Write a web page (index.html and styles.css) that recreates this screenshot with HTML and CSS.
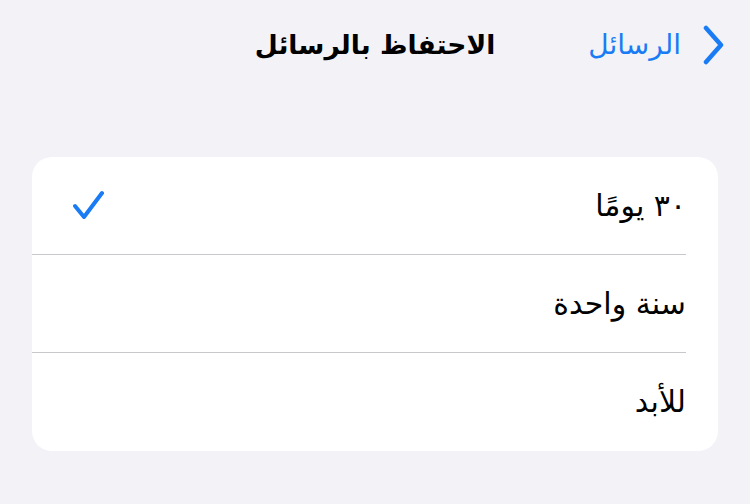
FILE: index.html
```html
<!DOCTYPE html>
<html lang="ar" dir="rtl">
<head>
<meta charset="utf-8">
<link rel="stylesheet" href="styles.css">
</head>
<body>
<header class="nav">
  <div class="back">
    <svg class="chev" width="22" height="40" viewBox="0 0 22 40"><path d="M3 3 L18 20 L3 37" fill="none" stroke="#1a7cf5" stroke-width="4.5" stroke-linecap="round" stroke-linejoin="round"/></svg>
    <span class="back-label">الرسائل</span>
  </div>
  <h1 class="title">الاحتفاظ بالرسائل</h1>
  <div class="spacer"></div>
</header>
<main>
  <section class="card">
    <div class="row">
      <div class="row-inner">
        <span class="label">٣٠ يومًا</span>
        <svg class="check" width="32" height="32" viewBox="0 0 32 32"><path d="M2 16 L11 27 L29 3" fill="none" stroke="#1a7cf5" stroke-width="4" stroke-linecap="round" stroke-linejoin="round"/></svg>
      </div>
    </div>
    <div class="row">
      <div class="row-inner">
        <span class="label">سنة واحدة</span>
      </div>
    </div>
    <div class="row last">
      <div class="row-inner">
        <span class="label">للأبد</span>
      </div>
    </div>
  </section>
</main>
</body>
</html>
```
FILE: styles.css
```css
html, body {
  margin: 0;
  padding: 0;
}
body {
  background: #f2f2f7;
  font-family: "DejaVu Sans", "Noto Sans", sans-serif;
  color: #000;
  width: 750px;
  height: 504px;
  overflow: hidden;
}
.nav {
  display: grid;
  grid-template-columns: 1fr auto 1fr;
  align-items: center;
  height: 90px;
}
.back {
  display: flex;
  align-items: center;
  gap: 22px;
  padding-right: 25px;
  color: #1a7cf5;
}
.chev {
  display: block;
}
.back-label {
  font-size: 28px;
  line-height: 1;
}
.title {
  margin: 0;
  font-size: 26.5px;
  font-weight: bold;
  line-height: 1;
}
.card {
  margin: 67px 32px 0;
  background: #fff;
  border-radius: 20px;
  overflow: hidden;
}
.row {
  padding-right: 32px;
  height: 98px;
}
.row-inner {
  height: 97px;
  border-bottom: 1px solid #c8c8cc;
  display: flex;
  align-items: center;
  justify-content: space-between;
}
.row.last .row-inner {
  border-bottom: none;
}
.label {
  font-size: 30px;
  line-height: 1;
}
.check {
  display: block;
  margin-left: 41px;
}
```
